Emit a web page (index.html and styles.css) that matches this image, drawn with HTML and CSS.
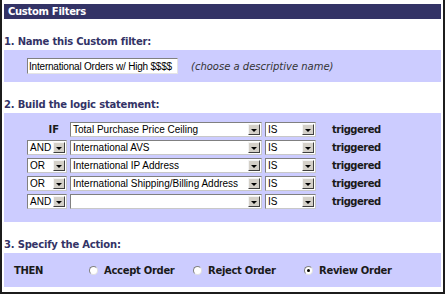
FILE: index.html
```html
<!DOCTYPE html>
<html>
<head>
<meta charset="utf-8">
<title>Custom Filters</title>
<link rel="stylesheet" href="styles.css">
</head>
<body>
<div class="panel">
<div class="title">Custom Filters</div>

<div class="heading">1. Name this Custom filter:</div>
<div class="box box_name">
    <input type="text" class="tbx" id="tbxName" value="International Orders w/ High $$$$">
    <span class="hint">(choose a descriptive name)</span>
</div>

<div class="heading">2. Build the logic statement:</div>
<div class="box box_logic">
    <div class="row">
        <div class="col_op"><span class="lbl_if">IF</span></div>
        <div class="sel sel_field"><span class="sel_text">Total Purchase Price Ceiling</span><span class="arrow"></span></div>
        <div class="sel sel_is"><span class="sel_text">IS</span><span class="arrow"></span></div>
        <span class="trig">triggered</span>
    </div>
    <div class="row">
        <div class="col_op"><div class="sel sel_op"><span class="sel_text">AND</span><span class="arrow"></span></div></div>
        <div class="sel sel_field"><span class="sel_text">International AVS</span><span class="arrow"></span></div>
        <div class="sel sel_is"><span class="sel_text">IS</span><span class="arrow"></span></div>
        <span class="trig">triggered</span>
    </div>
    <div class="row">
        <div class="col_op"><div class="sel sel_op"><span class="sel_text">OR</span><span class="arrow"></span></div></div>
        <div class="sel sel_field"><span class="sel_text">International IP Address</span><span class="arrow"></span></div>
        <div class="sel sel_is"><span class="sel_text">IS</span><span class="arrow"></span></div>
        <span class="trig">triggered</span>
    </div>
    <div class="row">
        <div class="col_op"><div class="sel sel_op"><span class="sel_text">OR</span><span class="arrow"></span></div></div>
        <div class="sel sel_field"><span class="sel_text">International Shipping/Billing Address</span><span class="arrow"></span></div>
        <div class="sel sel_is"><span class="sel_text">IS</span><span class="arrow"></span></div>
        <span class="trig">triggered</span>
    </div>
    <div class="row">
        <div class="col_op"><div class="sel sel_op"><span class="sel_text">AND</span><span class="arrow"></span></div></div>
        <div class="sel sel_field"><span class="sel_text"></span><span class="arrow"></span></div>
        <div class="sel sel_is"><span class="sel_text">IS</span><span class="arrow"></span></div>
        <span class="trig">triggered</span>
    </div>
</div>

<div class="heading">3. Specify the Action:</div>
<div class="box box_action">
    <span class="lbl_then">THEN</span>
    <label class="opt opt_accept"><span class="radio"></span>Accept Order</label>
    <label class="opt opt_reject"><span class="radio"></span>Reject Order</label>
    <label class="opt"><span class="radio checked"></span>Review Order</label>
</div>
</div>
</body>
</html>
```

FILE: styles.css
```css
body {
    margin: 0px;
    font-family: Verdana, "DejaVu Sans", sans-serif;
    font-size: 10px;
    background-color: white;
}
.panel {
    width: 445px;
    height: 294px;
    box-sizing: border-box;
    border: 2px solid #1c1c1c;
    border-top: none;
    padding: 4px 2px 0px 2px;
}
.title {
    height: 15px;
    line-height: 15px;
    background-color: #333366;
    color: white;
    font-weight: bold;
    letter-spacing: -0.3px;
    padding-left: 4px;
}
.heading {
    height: 14px;
    padding-top: 17px;
    line-height: 12px;
    font-weight: bold;
    letter-spacing: -0.2px;
    color: #333366;
}
.box {
    background-color: #ccccff;
    box-sizing: border-box;
}
.box_name {
    height: 32px;
    display: flex;
    align-items: center;
    padding-left: 23px;
}
.tbx {
    width: 151px;
    height: 16px;
    box-sizing: border-box;
    margin: 0px;
    padding: 0px 0px 0px 1px;
    border: 1px solid;
    border-color: #808080 #e4e4e4 #e4e4e4 #808080;
    font-family: "Liberation Sans", Arial, sans-serif;
    font-size: 10px;
    letter-spacing: -0.2px;
    color: black;
    background-color: white;
}
.hint {
    margin-left: 13px;
    font-style: italic;
    color: #333333;
}
.box_logic {
    height: 109px;
    padding: 9px 0px 0px 23px;
    display: flex;
    flex-direction: column;
    gap: 3px;
}
.row {
    display: flex;
    align-items: center;
    height: 15px;
}
.col_op {
    width: 40px;
    margin-right: 3px;
    text-align: right;
}
.lbl_if {
    font-weight: bold;
    padding-right: 8px;
    color: #1a1a1a;
}
.sel {
    display: flex;
    align-items: center;
    height: 15px;
    box-sizing: border-box;
    border: 1px solid;
    border-color: #808080 #c8c8c8 #c8c8c8 #808080;
    background-color: white;
    font-family: "Liberation Sans", Arial, sans-serif;
    font-size: 10px;
    color: black;
}
.sel_op {
    width: 40px;
}
.sel_field {
    width: 192px;
    margin-right: 3px;
}
.sel_is {
    width: 51px;
}
.sel_text {
    flex: 1;
    padding-left: 2px;
    white-space: nowrap;
    overflow: hidden;
    text-align: left;
    line-height: 13px;
}
.arrow {
    width: 12px;
    height: 11px;
    box-sizing: border-box;
    margin-right: 1px;
    background-color: #d4d0c8;
    border: 1px solid;
    border-color: #f4f4f4 #404040 #404040 #f4f4f4;
    display: flex;
    align-items: center;
    justify-content: center;
}
.arrow::after {
    content: "";
    border-left: 3px solid transparent;
    border-right: 3px solid transparent;
    border-top: 3px solid black;
    margin-top: 1px;
}
.trig {
    margin-left: 16px;
    font-weight: bold;
    letter-spacing: -0.5px;
    color: #1a1a1a;
}
.box_action {
    height: 34px;
    display: flex;
    align-items: center;
    padding-left: 10px;
    font-weight: bold;
    letter-spacing: -0.3px;
    color: #1a1a1a;
}
.lbl_then {
    width: 75px;
}
.opt {
    display: flex;
    align-items: center;
}
.opt_accept {
    width: 104px;
}
.opt_reject {
    width: 111px;
}
.radio {
    width: 9px;
    height: 9px;
    box-sizing: border-box;
    border-radius: 50%;
    border: 1px solid;
    border-color: #808080 #e0e0e0 #e0e0e0 #808080;
    background-color: white;
    margin-right: 6px;
    display: flex;
    align-items: center;
    justify-content: center;
}
.radio.checked::after {
    content: "";
    width: 3px;
    height: 3px;
    border-radius: 50%;
    background-color: black;
}
```
